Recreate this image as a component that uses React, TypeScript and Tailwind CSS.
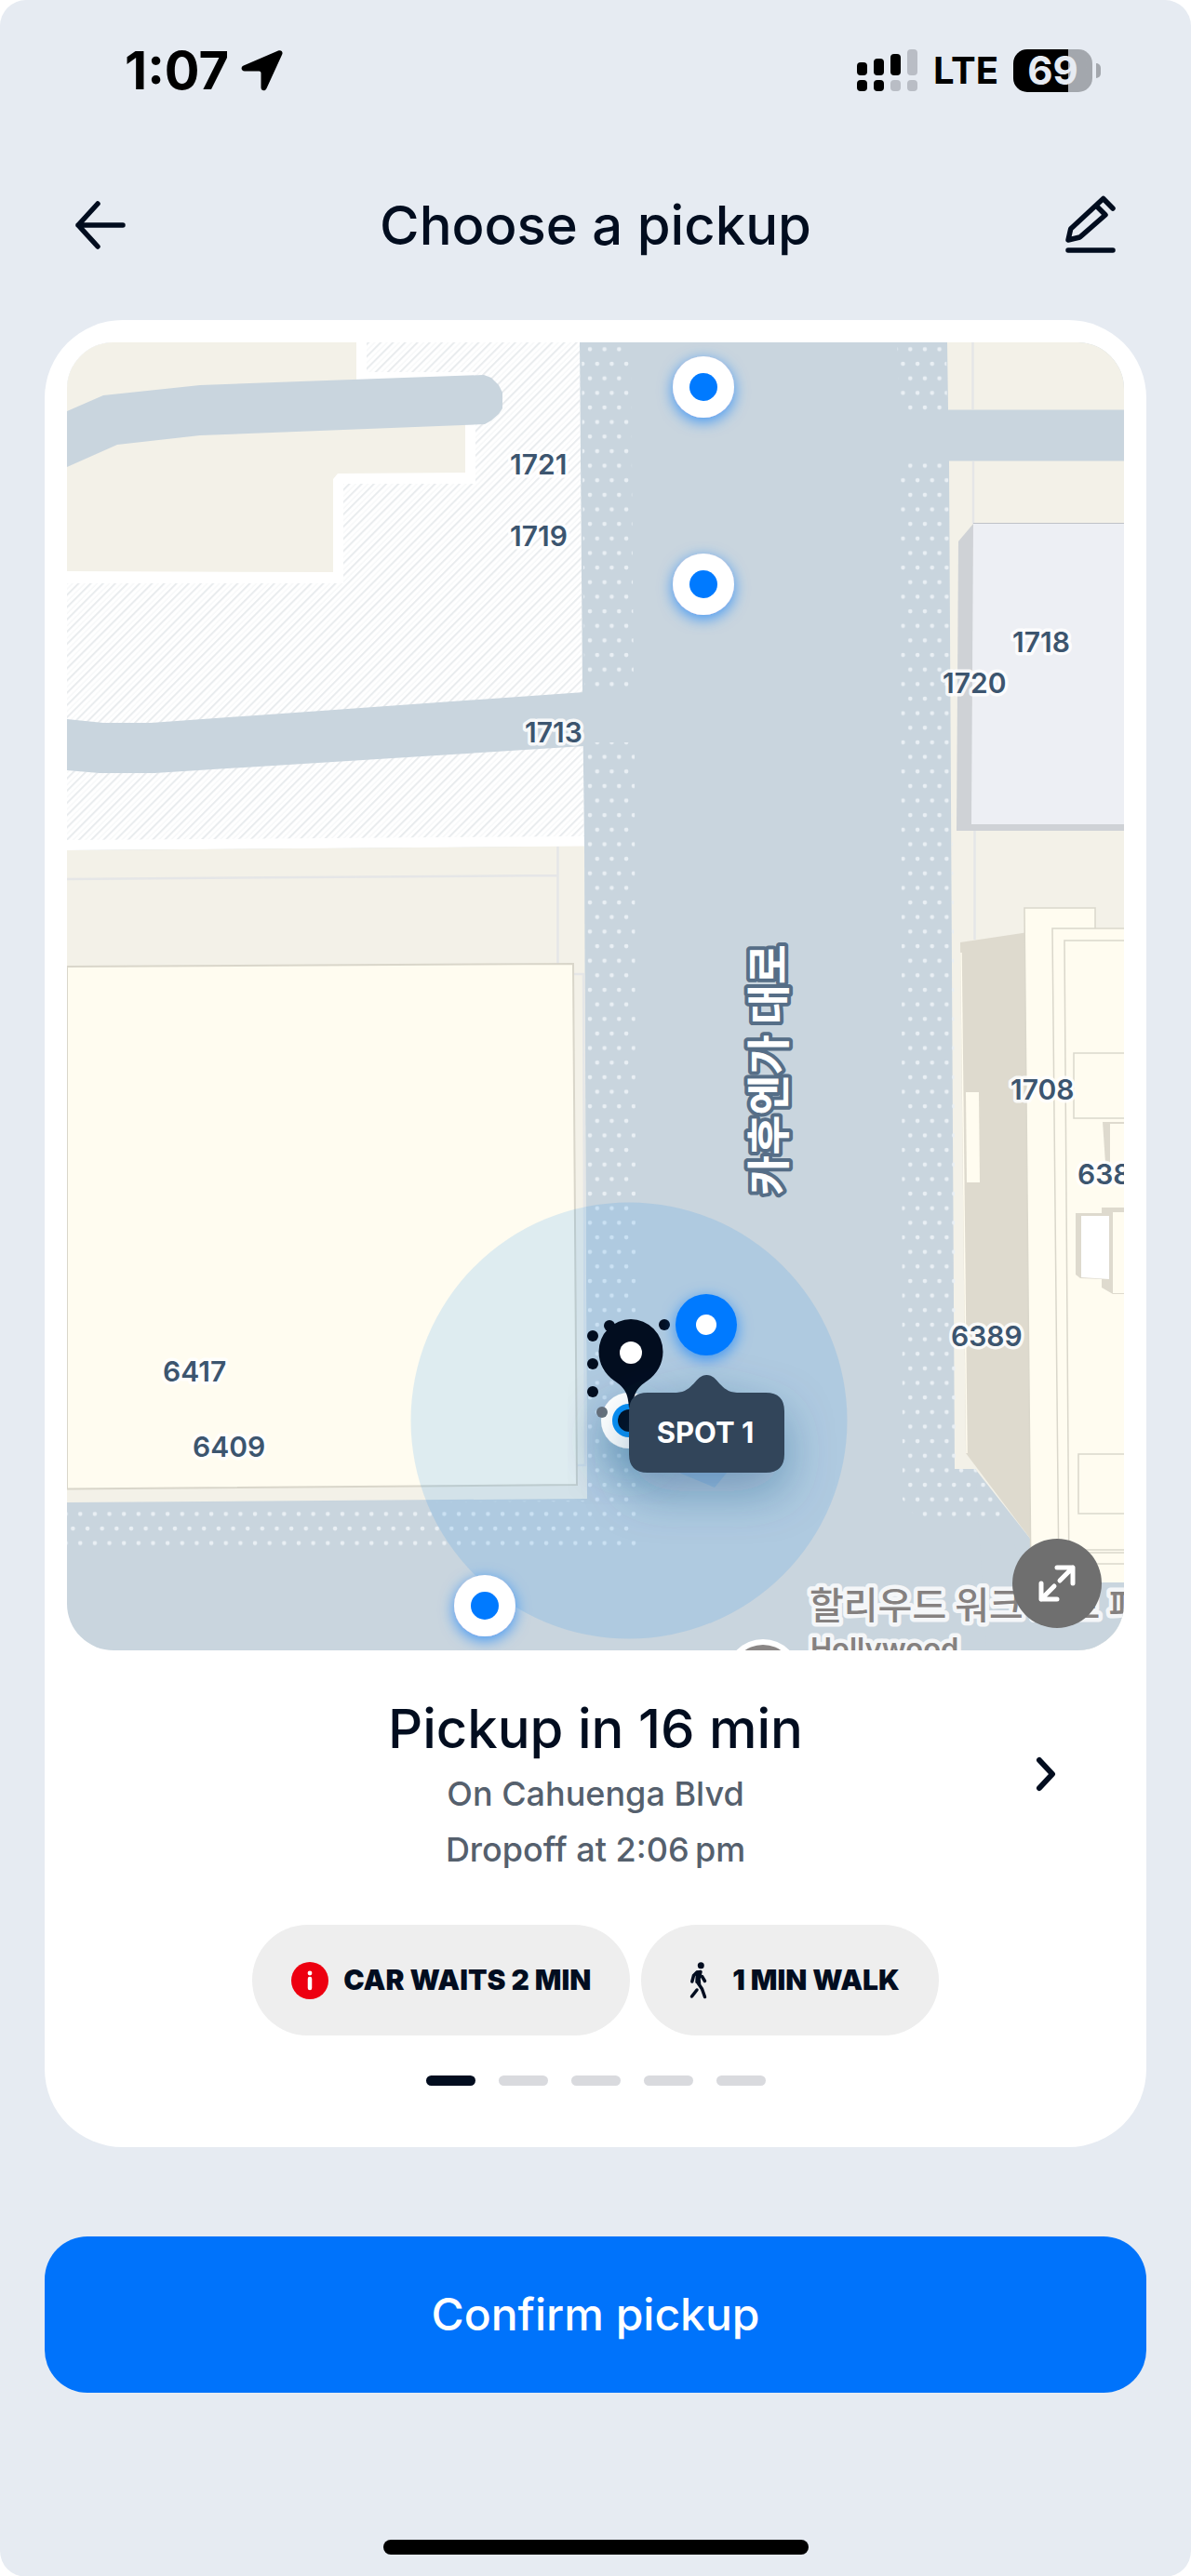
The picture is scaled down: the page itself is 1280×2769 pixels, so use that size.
import React from "react";

type Point = { x: number; y: number };

const houseNumbers: { x: number; y: number; label: string }[] = [
  { x: 548, y: 510, label: "1721" },
  { x: 548, y: 587, label: "1719" },
  { x: 564, y: 798, label: "1713" },
  { x: 1088, y: 701, label: "1718" },
  { x: 1013, y: 745, label: "1720" },
  { x: 1086, y: 1182, label: "1708" },
  { x: 1158, y: 1273, label: "6385" },
  { x: 175, y: 1485, label: "6417" },
  { x: 207, y: 1566, label: "6409" },
  { x: 1022, y: 1447, label: "6389" },
];

const spots: Point[] = [
  { x: 756, y: 416 },
  { x: 756, y: 628 },
  { x: 521, y: 1726 },
];

const trail: Point[] = [
  { x: 655, y: 1425 },
  { x: 714, y: 1424 },
  { x: 637, y: 1436 },
  { x: 637, y: 1466 },
  { x: 637, y: 1496 },
];

function StatusBar() {
  return (
    <div className="flex h-[152px] items-center justify-between pr-[97px] pl-[134px]">
      <div className="flex items-center gap-3">
        <span className="text-[56px] leading-none font-bold text-black">1:07</span>
        <svg viewBox="0 0 46 46" className="size-[46px]" aria-label="Location in use">
          <path
            d="M41 1.500C44 .200 46.500 2.500 45.200 5.500L28.500 42C27 45.500 22.500 44.800 22.500 41V25.500Q22.500 23.500 20.500 23.500H5C1.200 23.500 .200 19.200 3.800 17.600Z"
            fill="#000"
          />
        </svg>
      </div>
      <div className="flex items-center gap-4">
        <svg viewBox="0 0 66 46" className="h-[46px] w-[66px]" aria-label="Signal strength">
          <g fill="#000">
            <rect x="0" y="14" width="11" height="14" rx="4" />
            <rect x="18" y="10" width="11" height="18" rx="4" />
            <rect x="36" y="5" width="11" height="23" rx="4" />
            <rect x="0" y="33" width="11" height="12" rx="4" />
            <rect x="18" y="33" width="11" height="12" rx="4" />
          </g>
          <g fill="#b9bdc5">
            <rect x="54" y="0" width="11" height="28" rx="4" />
            <rect x="36" y="33" width="11" height="12" rx="4" />
            <rect x="54" y="33" width="11" height="12" rx="4" />
          </g>
        </svg>
        <span className="text-[40px] leading-none font-bold text-black">LTE</span>
        <div className="flex items-center gap-1" aria-label="Battery 69 percent">
          <div className="flex h-[46px] w-[85px] items-center justify-center rounded-[15px] bg-linear-to-r from-black from-69% to-[#a3a7ad] to-69%">
            <span className="text-[42px] leading-none font-bold text-[#e6ebf2]">69</span>
          </div>
          <span className="h-4 w-[5px] rounded-r-full bg-[#a3a7ad]" />
        </div>
      </div>
    </div>
  );
}

function Header() {
  return (
    <header className="flex h-[192px] items-center justify-between px-20 pb-3 text-[#020d1f]">
      <button type="button" aria-label="Back" className="size-14">
        <svg viewBox="0 0 56 56" className="size-14" fill="none" stroke="currentColor" strokeWidth="5.500" strokeLinecap="round" strokeLinejoin="round">
          <path d="M25 5 4 28 25 51M4 28H52" />
        </svg>
      </button>
      <h1 className="text-[58px] leading-none font-medium">Choose a pickup</h1>
      <button type="button" aria-label="Edit pickup" className="h-16 w-14">
        <svg viewBox="0 0 56 64" className="h-16 w-14" fill="none" stroke="currentColor" strokeWidth="5.500" strokeLinecap="round" strokeLinejoin="round">
          <path d="M4 59H52M52 14 41.700 3.500 6.700 36 4 48 16.500 45 44 21 34 11" />
        </svg>
      </button>
    </header>
  );
}

function PickupMap() {
  return (
    <div className="relative overflow-hidden rounded-[50px]">
      <svg viewBox="72 368 1136 1406" className="block h-auto w-full" role="img" aria-label="Map of pickup spots near Cahuenga Blvd">
        <defs>
          <pattern id="dots" x="630" y="903.500" width="15.650" height="31.300" patternUnits="userSpaceOnUse">
            <circle cx="4" cy="4" r="2.300" fill="#e9eff4" />
            <circle cx="11.800" cy="19.650" r="2.300" fill="#e9eff4" />
          </pattern>
          <pattern id="hatch" width="9.300" height="9.300" patternUnits="userSpaceOnUse" patternTransform="rotate(45)">
            <rect x="0" width="2" height="9.300" fill="#e9ecee" />
            <rect x="5.200" width="1" height="9.300" fill="#f3f5f6" />
          </pattern>
          <filter id="blueGlow" x="-60%" y="-60%" width="220%" height="220%">
            <feDropShadow dx="0" dy="4" stdDeviation="8" floodColor="#007aff" floodOpacity="0.7" />
          </filter>
          <filter id="softShadow" x="-60%" y="-60%" width="220%" height="260%">
            <feDropShadow dx="0" dy="20" stdDeviation="26" floodColor="#1f4f80" floodOpacity="0.4" />
          </filter>
        </defs>

        <rect x="72" y="368" width="1136" height="1406" fill="#c9d5de" />

        <path d="M72 368H623L626 744 628 910 72 914Z" fill="#fff" />
        <path d="M394 368H623L626 744 628 899 72 903V627H369V520H511V400H394Z" fill="url(#hatch)" />
        <path d="M72 368H383V440H500V508L363 509 358 515V615L72 614Z" fill="#f3f1e8" />
        <path d="M72 442 111 425 215 414 520 403 528 406 536 414 540 422V439L536 445 528 452 521 456 215 468 126 478 72 502Z" fill="#c9d5de" />
        <path d="M72 773 111 777H162L628 744V802L166 831H107L72 828Z" fill="#c9d5de" />

        <path d="M72 914 628 909.500 631 1611 72 1615Z" fill="#f3f1e8" />
        <path d="M72 945 599 941M599.500 910V1036M617 1047H627L629 1575H620" fill="none" stroke="#e5e6e7" strokeWidth="2.500" />
        <path d="M72 1039 616 1036 620 1596 72 1600.500Z" fill="#fffcf0" stroke="#d9d6ca" strokeWidth="2" />

        <path d="M1018 368H1208V440.500H1019ZM1020 495.500H1208V1774H1100L1048 1579H1026Z" fill="#f3f1e8" />
        <path d="M1045.500 368V440M1046 496V563M1047.500 893V1010" stroke="#e5e6e7" strokeWidth="2.500" />
        <path d="M1046 563 1030 582 1028 893H1208V563Z" fill="#cfd2d6" />
        <path d="M1046 563H1208V886H1044Z" fill="#edeff4" />
        <path d="M1046 562.500H1208" stroke="#bfc2c8" />

        <path d="M1048 1579 1108 1655V1774H1060Z" fill="#c9d5de" />
        <path d="M1108 1701H1208V1774H1090V1660Z" fill="#c9d5de" />
        <path d="M1032 1013 1102 1002.500 1108 1655 1038 1562Z" fill="#dedace" />
        <path d="M1033 1024 1039 1562" stroke="#fffcf0" strokeWidth="1.500" />
        <path d="M1038 1174H1052L1053 1271H1039Z" fill="#fffcf0" />
        <path d="M1101 976H1177V998H1208V1701H1108Z" fill="#fffcf0" />
        <g fill="none" stroke="#dad7cb" strokeWidth="1.500">
          <path d="M1108 1701 1101 976H1177V998M1208 998H1131L1138 1701M1208 1011H1144L1149 1701" />
          <path d="M1208 1132H1154V1202H1208M1208 1563H1159V1627H1208M1138 1666H1208M1138 1669H1208M1138 1681H1208" />
        </g>
        <path d="M1185 1206H1208V1250H1188Z" fill="#dedace" />
        <path d="M1193 1208H1208V1250H1193Z" fill="#fffcf0" />
        <path d="M1156 1304H1184V1298H1208V1391H1196L1184 1384V1375L1161 1374 1156 1370Z" fill="#dedace" />
        <path d="M1162 1307H1192V1375L1162 1373Z" fill="#fff" />
        <path d="M1196 1303H1208V1390H1196Z" fill="#fffcf0" />

        <g fill="url(#dots)">
          <path d="M625 368H678L681 739H628ZM630 798H682L684 1662 72 1671V1618L632 1613Z" />
          <path d="M964 368H1017L1018 441H967ZM968 495H1019L1025 1000 1027 1579H1048L1088 1632H985L970 1612Z" />
        </g>

        <g fill="#3c556f" stroke="#fff" strokeOpacity="0.85" strokeWidth="7" strokeLinejoin="round" paintOrder="stroke" fontFamily="Inter, sans-serif" fontSize="30" fontWeight="600">
          {houseNumbers.map((n) => (
            <text key={n.label} x={n.x} y={n.y}>{n.label}</text>
          ))}
        </g>
        <text x="-1285" y="843" transform="rotate(-90)" fill="#fff" stroke="#566e87" strokeWidth="8" strokeLinejoin="round" paintOrder="stroke" fontFamily="'Noto Sans CJK KR', sans-serif" fontSize="47" fontWeight="700">
          카후엔가 대로
        </text>
        <g fill="#858180" stroke="#f4f6f8" strokeWidth="9" strokeLinejoin="round" paintOrder="stroke" fontWeight="500">
          <text x="870" y="1740" fontFamily="'Noto Sans CJK KR', sans-serif" fontSize="40">할리우드 워크 오브 페임</text>
          <text x="871" y="1783" fontFamily="Inter, sans-serif" fontSize="31" fontWeight="600">Hollywood</text>
        </g>
        <circle cx="820" cy="1802" r="40" fill="#fff" />
        <circle cx="820" cy="1802" r="34" fill="#8a8685" />

        <circle cx="676" cy="1527" r="234.500" fill="#0084f0" fillOpacity="0.130" />
        <path d="M676 1527 732 1584 768 1599 800 1560Z" fill="#3b9cf0" fillOpacity="0.200" />

        {spots.map((s) => (
          <g key={s.y}>
            <circle cx={s.x} cy={s.y} r="33" fill="#fff" filter="url(#blueGlow)" />
            <circle cx={s.x} cy={s.y} r="15" fill="#007aff" />
          </g>
        ))}

        <circle cx="676" cy="1527" r="30" fill="#fff" filter="url(#softShadow)" />
        <circle cx="676" cy="1527" r="18" fill="#0a90f5" />
        <circle cx="676" cy="1527" r="12" fill="#020d1f" />
        <g fill="#020d1f">
          {trail.map((t) => (
            <circle key={`${t.x}-${t.y}`} cx={t.x} cy={t.y} r="6" />
          ))}
          <path d="M678 1418A34.500 35 0 0 1 712.500 1453C712.500 1466 706 1477 696 1484C684 1492 681 1498 680 1513H676C675 1498 672 1492 660 1484C650 1477 643.500 1466 643.500 1453A34.500 35 0 0 1 678 1418Z" />
        </g>
        <circle cx="678" cy="1454" r="12" fill="#fff" />
        <circle cx="647" cy="1518" r="6" fill="#65707b" />

        <circle cx="759" cy="1424" r="33" fill="#007aff" filter="url(#blueGlow)" />
        <circle cx="759" cy="1424" r="11" fill="#fff" />
        <path
          d="M696 1497H727C746 1496 747 1478 759.500 1478C772 1478 773 1496 792 1497H823Q843 1497 843 1517V1563Q843 1583 823 1583H696Q676 1583 676 1563V1517Q676 1497 696 1497Z"
          fill="#30455a"
          filter="url(#softShadow)"
        />
        <text x="758" y="1551" textAnchor="middle" fill="#fff" fontFamily="Inter, sans-serif" fontSize="31" fontWeight="700">SPOT 1</text>
      </svg>

      <button type="button" aria-label="Expand map" className="absolute right-6 bottom-6 flex size-24 items-center justify-center rounded-full bg-[#6f6f6f] text-white">
        <svg viewBox="0 0 42 42" className="size-[42px]" fill="none" stroke="currentColor" strokeWidth="5" strokeLinecap="round" strokeLinejoin="round">
          <path d="M21 4H38V21M38 4 24 18M4 21V38H21M4 38 18 24" />
        </svg>
      </button>
    </div>
  );
}

function PickupDetails() {
  return (
    <section className="pb-[66px]">
      <div className="relative flex flex-col items-center pt-12 text-center">
        <h2 className="text-[58px] leading-[72px] font-medium text-[#020d1f]">Pickup in 16 min</h2>
        <p className="pt-1 text-[36px] leading-[60px] font-medium text-[#55606d]">On Cahuenga Blvd</p>
        <p className="text-[36px] leading-[60px] font-medium text-[#55606d]">Dropoff at 2:06{"\u2009"}pm</p>
        <button type="button" aria-label="Next pickup spot" className="absolute top-[101px] right-[52px] flex size-16 items-center justify-center">
          <svg viewBox="0 0 24 40" className="h-10 w-6" fill="none" stroke="#020d1f" strokeWidth="6" strokeLinecap="round" strokeLinejoin="round">
            <path d="M5 5 19 20 5 35" />
          </svg>
        </button>
      </div>

      <div className="mt-[51px] flex justify-center gap-3 text-[30px] font-black text-[#020d1f]">
        <div className="flex h-[119px] items-center gap-4 rounded-full bg-[#eee] px-[42px]">
          <svg viewBox="0 0 40 40" className="size-10">
            <circle cx="20" cy="20" r="20" fill="#ed0010" />
            <circle cx="20" cy="12" r="2.400" fill="#fff" />
            <path d="M20 18V28" stroke="#fff" strokeWidth="4.500" strokeLinecap="round" />
          </svg>
          <span>CAR WAITS 2 MIN</span>
        </div>
        <div className="flex h-[119px] items-center gap-4 rounded-full bg-[#eee] px-[42px]">
          <svg viewBox="0 0 40 40" className="size-10" fill="none" stroke="currentColor" strokeWidth="3.500" strokeLinecap="round" strokeLinejoin="round">
            <circle cx="22.300" cy="3.700" r="3.500" fill="currentColor" stroke="none" />
            <path d="M18.500 11 22 10.500 20 18 20.500 23.500 18 21.500Z" fill="currentColor" />
            <path d="M18 11 14.500 14.500 12.800 21M23.500 15.500 26.500 20.500M19.500 23 23.500 29 26.500 37.500M18 30 12.500 37" />
          </svg>
          <span>1 MIN WALK</span>
        </div>
      </div>

      <div className="mt-[43px] flex justify-center gap-[25px]" aria-label="Spot 1 of 5">
        <span className="h-[11px] w-[53px] rounded-full bg-[#020d1f]" />
        <span className="h-[11px] w-[53px] rounded-full bg-[#d9dade]" />
        <span className="h-[11px] w-[53px] rounded-full bg-[#d9dade]" />
        <span className="h-[11px] w-[53px] rounded-full bg-[#d9dade]" />
        <span className="h-[11px] w-[53px] rounded-full bg-[#d9dade]" />
      </div>
    </section>
  );
}

export default function App() {
  return (
    <div className="bg-white">
      <main className="rounded-[28px] bg-[#e6ebf2] pb-6 font-[Inter,sans-serif]">
        <StatusBar />
        <Header />
        <div className="mx-12 rounded-[84px] bg-white px-6 pt-6">
          <PickupMap />
          <PickupDetails />
        </div>
        <div className="px-12 pt-24">
          <button type="button" className="h-[168px] w-full rounded-[46px] bg-[#0073fb] text-[48px] font-medium text-white">
            Confirm pickup
          </button>
        </div>
        <div className="mx-auto mt-[158px] h-4 w-[457px] rounded-full bg-black" />
      </main>
    </div>
  );
}
